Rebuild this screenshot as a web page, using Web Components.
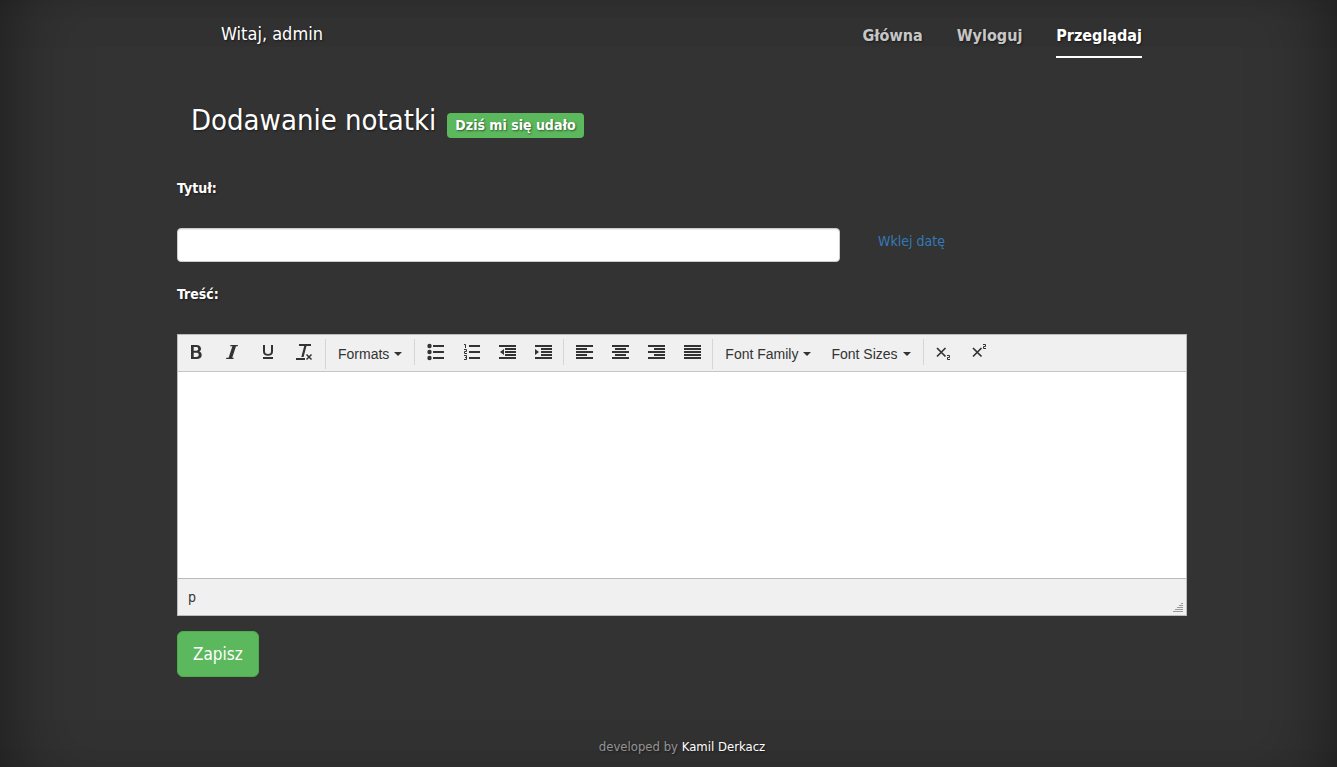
<!DOCTYPE html>
<html lang="pl">
<head>
<meta charset="utf-8">
<meta name="viewport" content="width=device-width, initial-scale=1">
<title>Dodawanie notatki</title>
<style>
  html, body { margin: 0; background: #333; }
  body {
    font: 14px/20px "DejaVu Sans Condensed", Tahoma, "Noto Sans", sans-serif;
    color: #fff;
    text-shadow: 1px 1px 2px rgba(0, 0, 0, .5);
  }
</style>
</head>
<body>
<note-app></note-app>

<template id="t-app">
  <style>
    :host {
      display: flex; flex-direction: column; box-sizing: border-box;
      min-height: 100vh; padding: 0 0 10px 27px;
      box-shadow: inset 48px 0 80px -48px rgba(0, 0, 0, .5), inset -48px 0 80px -48px rgba(0, 0, 0, .5);
    }
    .inner {
      display: flex; flex-direction: column; flex: 1;
      width: 100%; max-width: 1010px; margin: 0 auto;
    }
    page-footer { margin-top: auto; }
  </style>
  <div class="inner">
    <page-header user="admin">
      <nav-link href="#glowna">Główna</nav-link>
      <nav-link href="#wyloguj">Wyloguj</nav-link>
      <nav-link href="#przegladaj" active>Przeglądaj</nav-link>
    </page-header>
    <main><note-form></note-form></main>
    <page-footer></page-footer>
  </div>
</template>

<template id="t-header">
  <style>
    :host { display: block; }
    header { display: flex; justify-content: space-between; align-items: flex-start; padding: 24px 45px 0 44px; }
    h3 { margin: 0; font-size: 18px; line-height: 20px; font-weight: 400; }
    nav { display: flex; gap: 34px; }
  </style>
  <header>
    <h3>Witaj, <span></span></h3>
    <nav><slot></slot></nav>
  </header>
</template>

<template id="t-navlink">
  <style>
    :host { display: block; }
    a {
      display: block; padding-bottom: 8px; border-bottom: 2px solid transparent;
      font-size: 16px; line-height: 24px; font-weight: 700; color: rgba(255, 255, 255, .75); text-decoration: none;
    }
    :host([active]) a { color: #fff; border-color: #fff; }
  </style>
  <a><slot></slot></a>
</template>

<template id="t-form">
  <style>
    :host { display: block; }
    form { display: flex; flex-direction: column; align-items: flex-start; }
    h1 {
      display: flex; align-items: flex-end; gap: 11px; margin: 44px 0 40px; padding-left: 14px;
      font-size: 29px; line-height: 36px; font-weight: 400;
    }
    .badge {
      padding: 0 8px; border-radius: 4px; background: #5cb85c;
      font-size: 14px; line-height: 25px; font-weight: 700;
    }
    label { font-weight: 700; line-height: 20px; }
    .row { display: flex; gap: 38px; width: 100%; margin: 30px 0 22px; }
    input {
      box-sizing: border-box; width: 663px; max-width: 66%; height: 34px; padding: 6px 12px;
      border: 1px solid #ccc; border-radius: 4px; background: #fff; color: #555;
      font: inherit; box-shadow: inset 0 1px 1px rgba(0, 0, 0, .08);
    }
    a { margin-top: 3px; color: #337ab7; text-decoration: none; text-shadow: none; }
    rich-editor { width: 100%; margin: 30px 0 15px; }
    button {
      height: 46px; padding: 0 15px; border: 1px solid #4cae4c; border-radius: 6px;
      background: #5cb85c; color: #fff; font: inherit; font-size: 17px;
    }
  </style>
  <form>
    <h1>Dodawanie notatki <span class="badge">Dziś mi się udało</span></h1>
    <label for="title">Tytuł:</label>
    <div class="row">
      <input id="title" type="text">
      <a href="#data">Wklej datę</a>
    </div>
    <label id="body-label">Treść:</label>
    <rich-editor label="Treść"></rich-editor>
    <button type="button">Zapisz</button>
  </form>
</template>

<template id="t-editor">
  <style>
    :host { display: block; box-sizing: border-box; border: 1px solid #bbb; background: #f0f0f0; color: #333; text-shadow: none; }
    .bar { display: flex; flex-wrap: wrap; align-items: flex-start; padding: 4px 0 2px; border-bottom: 1px solid #c5c5c5; }
    textarea {
      display: block; box-sizing: border-box; width: 100%; height: 206px; padding: 8px;
      border: 0; outline: 0; resize: none; background: #fff; font: inherit; color: #000;
    }
    .status { display: flex; justify-content: space-between; align-items: flex-end; height: 36px; border-top: 1px solid #bbb; }
    .path { padding: 0 10px 8px; }
    svg { display: block; margin: 0 3px 3px 0; }
  </style>
  <div class="bar" role="toolbar">
    <tool-group first>
      <tool-button icon="bold" label="Bold"></tool-button>
      <tool-button icon="italic" label="Italic"></tool-button>
      <tool-button icon="underline" label="Underline"></tool-button>
      <tool-button icon="clear" label="Clear formatting"></tool-button>
    </tool-group>
    <tool-group><tool-menu>Formats</tool-menu></tool-group>
    <tool-group>
      <tool-button icon="bullets" label="Bullet list"></tool-button>
      <tool-button icon="numbers" label="Numbered list"></tool-button>
      <tool-button icon="outdent" label="Decrease indent"></tool-button>
      <tool-button icon="indent" label="Increase indent"></tool-button>
    </tool-group>
    <tool-group>
      <tool-button icon="left" label="Align left"></tool-button>
      <tool-button icon="center" label="Align center"></tool-button>
      <tool-button icon="right" label="Align right"></tool-button>
      <tool-button icon="justify" label="Justify"></tool-button>
    </tool-group>
    <tool-group><tool-menu>Font Family</tool-menu><tool-menu>Font Sizes</tool-menu></tool-group>
    <tool-group>
      <tool-button icon="sub" label="Subscript"></tool-button>
      <tool-button icon="sup" label="Superscript"></tool-button>
    </tool-group>
  </div>
  <textarea></textarea>
  <div class="status">
    <span class="path">p</span>
    <svg width="10" height="9" viewBox="0 0 10 9" shape-rendering="crispEdges" aria-hidden="true"><path fill="#999" d="M8 0h2v1H8zM6 2h4v1H6zM4 4h6v1H4zM2 6h8v1H2zM0 8h10v1H0z"/></svg>
  </div>
</template>

<template id="t-group">
  <style>
    :host { display: flex; padding: 0 2px; border-left: 1px solid #d5d5d5; }
    :host([first]) { padding-left: 0; padding-right: 3px; border-left: 0; }
  </style>
  <slot></slot>
</template>

<template id="t-button">
  <style>
    :host { display: block; }
    button { display: block; padding: 5px 10px; border: 0; background: none; color: #333; }
    svg { display: block; overflow: visible; }
  </style>
  <button type="button"><svg width="16" height="16" viewBox="0 0 16 16" fill="currentColor" aria-hidden="true"></svg></button>
</template>

<template id="t-menu">
  <style>
    :host { display: block; }
    button {
      display: flex; align-items: center; gap: 5px; padding: 5px 10px; border: 0; background: none;
      color: #333; font: 14px/20px "Liberation Sans", Arial, sans-serif;
    }
    i { border: 4px solid transparent; border-top-color: #333; border-bottom: 0; }
  </style>
  <button type="button"><slot></slot><i></i></button>
</template>

<template id="t-footer">
  <style>
    :host { display: block; text-align: center; }
    footer { font-size: 13px; color: rgba(255, 255, 255, .5); }
    a { color: #fff; text-decoration: none; }
  </style>
  <footer>developed by <a href="#autor">Kamil Derkacz</a></footer>
</template>

<script>
  class Base extends HTMLElement {
    constructor() {
      super();
      this.attachShadow({ mode: 'open' });
      this.shadowRoot.append(document.getElementById(this.constructor.template).content.cloneNode(true));
    }
    $(selector) { return this.shadowRoot.querySelector(selector); }
  }

  const bars = (list) => `<path shape-rendering="crispEdges" d="${list.map(([x, y, w]) => `M${x} ${y}h${w}v2h-${w}z`).join('')}"/>`;
  const ICONS = {
    bold: '<path fill-rule="evenodd" d="M3 1h5.400C11.300 1 13 2.400 13 4.700c0 1.400-.7 2.400-1.800 2.900C12.800 8.100 13.700 9.300 13.700 11c0 2.600-1.900 4-4.900 4H3zM5.700 3.100v3.600h2.200c1.500 0 2.300-.6 2.300-1.800s-.8-1.800-2.300-1.800zM5.700 8.800v4.100h2.500c1.700 0 2.500-.7 2.500-2.100s-.9-2-2.500-2z"/>',
    italic: '<path d="M6.500 1H14l-.3 1.200h-1.700L8.200 13.800h1.500L9.400 15H2l.3-1.200h2.300L8.400 2.200H6.200z"/>',
    underline: '<path d="M3 1h2v6.500C5 9.200 6.200 10 8 10s3-.8 3-2.500V1h2v6.700C13 10.400 11 11.800 8 11.800S3 10.400 3 7.700zM3 13h10v2H3z"/>',
    clear: '<path d="M3 0h12v2h-4.500L7.600 13H5.300L8.200 2H3zM0 14h9v2H0z"/><path d="M10.500 10.500l5 5m0-5l-5 5" stroke="currentColor" stroke-width="1.500"/>',
    bullets: bars([[6, 1, 11], [6, 7, 11], [6, 13, 11]]) + '<circle cx="2.500" cy="2" r="2.200"/><circle cx="2.500" cy="8" r="2.200"/><circle cx="2.500" cy="14" r="2.200"/>',
    numbers: bars([[6, 1, 11], [6, 7, 11], [6, 13, 11]]) + '<path fill="none" stroke="currentColor" d="M1 .5h1.500V4M1 5.500h2.500v2h-2v2H4M1 11.500h2.500v4H1m1-2h1.500"/>',
    outdent: bars([[0, 1, 17], [6, 4, 11], [6, 7, 11], [6, 10, 11], [0, 13, 17]]) + '<path d="M5 5v6L1 8z"/>',
    indent: bars([[0, 1, 17], [6, 4, 11], [6, 7, 11], [6, 10, 11], [0, 13, 17]]) + '<path d="M0 5v6l4-3z"/>',
    left: bars([[0, 1, 17], [0, 4, 11], [0, 7, 17], [0, 10, 11], [0, 13, 17]]),
    center: bars([[0, 1, 17], [3, 4, 11], [0, 7, 17], [3, 10, 11], [0, 13, 17]]),
    right: bars([[0, 1, 17], [6, 4, 11], [0, 7, 17], [6, 10, 11], [0, 13, 17]]),
    justify: bars([[0, 1, 17], [0, 4, 17], [0, 7, 17], [0, 10, 17], [0, 13, 17]]),
    sub: '<path fill="none" stroke="currentColor" stroke-width="1.700" d="M1 4l8.500 8.500M9.500 4L1 12.500"/><path fill="none" stroke="currentColor" d="M11 11.500h2.500v2h-2v2H14"/>',
    sup: '<path fill="none" stroke="currentColor" stroke-width="1.700" d="M1 4l8.500 8.500M9.500 4L1 12.500"/><path fill="none" stroke="currentColor" d="M11 .5h2.500v2h-2v2H14"/>'
  };

  customElements.define('page-header', class extends Base {
    static template = 't-header';
    connectedCallback() { this.$('span').textContent = this.getAttribute('user'); }
  });
  customElements.define('nav-link', class extends Base {
    static template = 't-navlink';
    connectedCallback() { this.$('a').href = this.getAttribute('href'); }
  });
  customElements.define('tool-group', class extends Base { static template = 't-group'; });
  customElements.define('tool-button', class extends Base {
    static template = 't-button';
    connectedCallback() {
      this.$('svg').innerHTML = ICONS[this.getAttribute('icon')];
      this.$('button').setAttribute('aria-label', this.getAttribute('label'));
    }
  });
  customElements.define('tool-menu', class extends Base { static template = 't-menu'; });
  customElements.define('rich-editor', class extends Base {
    static template = 't-editor';
    connectedCallback() { this.$('textarea').setAttribute('aria-label', this.getAttribute('label')); }
    focus() { this.$('textarea').focus(); }
  });
  customElements.define('note-form', class extends Base {
    static template = 't-form';
    connectedCallback() {
      this.$('#body-label').addEventListener('click', () => this.$('rich-editor').focus());
    }
  });
  customElements.define('page-footer', class extends Base { static template = 't-footer'; });
  customElements.define('note-app', class extends Base { static template = 't-app'; });
</script>
</body>
</html>
